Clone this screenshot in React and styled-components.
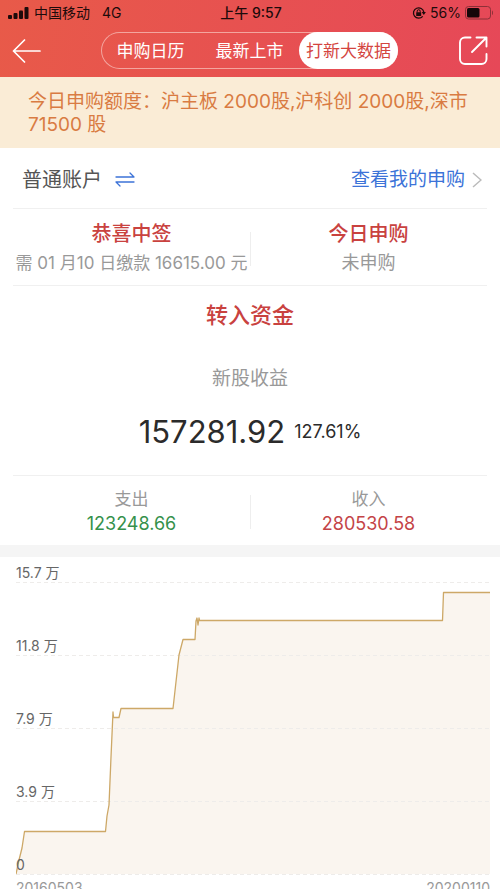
import React from "react";
import styled, { createGlobalStyle } from "styled-components";

const GlobalStyle = createGlobalStyle`
  * { box-sizing: border-box; }
  body {
    margin: 0;
    background: #fff;
    font-family: Inter, "Noto Sans CJK SC", sans-serif;
    color: #2b2b2b;
  }
  button { font: inherit; color: inherit; background: none; border: 0; padding: 0; cursor: pointer; }
  h2, p { margin: 0; font-weight: 400; }
`;

const Screen = styled.div`
  height: 100vh;
  overflow: hidden;
`;

const Header = styled.header`
  height: 77px;
  background: linear-gradient(100deg, #e85a49, #e64858);
`;

const StatusBar = styled.div`
  display: grid;
  grid-template-columns: 1fr auto 1fr;
  align-items: center;
  height: 26px;
  padding: 0 6px 0 8px;
  font-size: 14px;
  line-height: 20px;
  color: #1d0b0b;
`;

const StatusGroup = styled.div`
  display: flex;
  align-items: center;
  justify-content: ${(p) => (p.$end ? "flex-end" : "flex-start")};
  gap: ${(p) => (p.$end ? "4px" : "5px")};
`;

const Network = styled.span`
  margin-left: 7px;
`;

const Clock = styled.time`
  font-weight: 500;
`;

const NavBar = styled.nav`
  display: flex;
  align-items: center;
  justify-content: space-between;
  padding: 6px 12px 0;
`;

const IconButton = styled.button`
  display: flex;
  && { color: #fff; }
`;

const Tabs = styled.div`
  display: flex;
  flex: 1;
  height: 37px;
  margin: 0 61px 0 59px;
  border-radius: 19px;
  box-shadow: inset 0 0 0 1px #f3a59f;
`;

const Tab = styled.button`
  flex: 1;
  border-radius: 19px;
  white-space: nowrap;
  && {
    font-size: 17px;
    line-height: 24px;
    color: ${(p) => (p.$active ? "#d4453f" : "#fff")};
    background: ${(p) => (p.$active ? "#fff" : "transparent")};
  }
`;

const Notice = styled.p`
  padding: 13px 28px 12px;
  background: #faecd6;
  color: #d97b42;
  font-size: 19px;
  line-height: 23px;
`;

const AccountRow = styled.div`
  display: flex;
  align-items: center;
  justify-content: space-between;
  height: 60px;
  padding: 3px 18px 0 22px;
`;

const AccountSwitch = styled.button`
  display: flex;
  align-items: center;
  gap: 13px;
  && {
    color: #555;
    font-size: 20px;
    line-height: 28px;
  }
`;

const OrdersLink = styled.a`
  display: flex;
  align-items: center;
  gap: 7px;
  color: #3c73d8;
  font-size: 19px;
  line-height: 28px;
  text-decoration: none;
`;

const Split = styled.section`
  display: grid;
  grid-template-columns: 1fr 1fr;
  margin: 0 13px;
  padding: ${(p) => (p.$compact ? "11px 0 8px" : "11px 0 7px")};
  border-top: 1px solid #f0f0f0;
  border-bottom: ${(p) => (p.$compact ? "0" : "1px solid #f0f0f0")};
`;

const Cell = styled.div`
  display: flex;
  flex-direction: column;
  align-items: center;
  white-space: nowrap;
  & + & {
    background: linear-gradient(#eee, #eee) left center / 1px 34px no-repeat;
  }
`;

const CellTitle = styled.h2`
  color: #c9423f;
  font-size: 20px;
  line-height: 28px;
  font-weight: 500;
`;

const CellText = styled.p`
  color: #999;
  font-size: ${(p) => (p.$long ? "17px" : "18px")};
  line-height: 30px;
`;

const AmountLabel = styled.p`
  color: #999;
  font-size: 17px;
  line-height: 24px;
`;

const Amount = styled.p`
  color: ${(p) => (p.$gain ? "#c44447" : "#35914b")};
  font-size: 18px;
  line-height: 26px;
`;

const Summary = styled.section`
  display: flex;
  flex-direction: column;
  align-items: center;
  padding: 13px 0 21px;
`;

const TransferButton = styled.button`
  && {
    color: #c9423f;
    font-size: 22px;
    line-height: 32px;
    font-weight: 500;
  }
`;

const ProfitLabel = styled.p`
  margin-top: 34px;
  color: #999;
  font-size: 19px;
  line-height: 28px;
`;

const Profit = styled.p`
  display: flex;
  align-items: center;
  gap: 9px;
  margin-top: 17px;
  font-size: 31px;
  line-height: 44px;
`;

const Rate = styled.span`
  font-size: 18px;
`;

const ChartPanel = styled.section`
  padding: 0 10px 0 16px;
  border-top: 12px solid #f5f5f5;
`;

const Plot = styled.div`
  display: grid;
  & > * { grid-area: 1 / 1; }
`;

const PlotSvg = styled.svg`
  display: block;
  width: 100%;
  height: 318px;
`;

const AxisLabels = styled.div`
  display: flex;
  flex-direction: column;
  gap: 55px;
  padding-top: 7px;
  color: #666;
  font-size: 14px;
  line-height: 18px;
`;

const Dates = styled.div`
  display: flex;
  justify-content: space-between;
  padding-top: 4px;
  color: #999;
  font-size: 14px;
  line-height: 18px;
`;

const tabs = ["申购日历", "最新上市", "打新大数据"];
const axis = ["15.7 万", "11.8 万", "7.9 万", "3.9 万", "0"];
const gridLines = [25, 98, 171, 244, 317];
const series =
  "0,317 3,303 6,291 8.5,274.5 89.5,274.5 91,259 93,248 95,200 97,155 97.5,160.5 103,160.5 105,151.5 157,151.5 163,98 167,82.5 179,82.5 180,64 181,61 182,68 183,61 183.5,63.5 426.5,63.5 427.5,35.5 474,35.5";

const SignalIcon = () => (
  <svg width="21" height="12" viewBox="0 0 21 12" fill="currentColor" aria-hidden="true">
    <rect x="0" y="8" width="4" height="4" rx="1" />
    <rect x="5.5" y="6" width="4" height="6" rx="1" />
    <rect x="11" y="3.5" width="4" height="8.5" rx="1" />
    <rect x="16.5" y="0" width="4" height="12" rx="1" />
  </svg>
);

const RotationLockIcon = () => (
  <svg width="14" height="14" viewBox="0 0 14 14" fill="none" stroke="currentColor" strokeWidth="1.3" aria-hidden="true">
    <path d="M10.7 10.3A5.2 5.2 0 1 1 11.8 6.2" />
    <path d="M9.7 6.1h4.2L11.8 9z" fill="currentColor" stroke="none" />
    <rect x="4.2" y="6.3" width="5" height="3.7" rx=".5" fill="currentColor" stroke="none" />
    <path d="M5.2 6.5V5.2a1.5 1.5 0 0 1 3 0v1.3" strokeWidth="1" />
  </svg>
);

const BatteryIcon = () => (
  <svg width="29" height="14" viewBox="0 0 29 14" aria-hidden="true">
    <rect x=".5" y=".5" width="25" height="12.5" rx="3" fill="none" stroke="#8d3038" />
    <rect x="2" y="2" width="12.5" height="9.5" rx="1.5" fill="#160609" />
    <path d="M27 4.5c1.3.5 1.3 4 0 4.5z" fill="#8d3038" />
  </svg>
);

const BackIcon = () => (
  <svg width="30" height="24" viewBox="0 0 30 24" fill="none" stroke="currentColor" strokeWidth="1.7" strokeLinecap="round" strokeLinejoin="round" aria-hidden="true">
    <path d="M28 12H1.5M12.5 1 1.5 12l11 11" />
  </svg>
);

const ShareIcon = () => (
  <svg width="29" height="29" viewBox="0 0 29 29" fill="none" stroke="currentColor" strokeWidth="1.9" strokeLinecap="round" strokeLinejoin="round" aria-hidden="true">
    <path d="M11.5 1.5H6a5 5 0 0 0-5 5V23a5 5 0 0 0 5 5h16.500a5 5 0 0 0 5-5v-5M17.500 1.500h10v9M27.500 1.500 13 16" />
  </svg>
);

const SwapIcon = () => (
  <svg width="20" height="15" viewBox="0 0 20 15" fill="none" stroke="#3c73d8" strokeWidth="1.3" strokeLinecap="round" strokeLinejoin="round" aria-hidden="true">
    <path d="M1 5h18l-4-4M19 10H1l4 4" />
  </svg>
);

const ChevronIcon = () => (
  <svg width="10" height="16" viewBox="0 0 10 16" fill="none" stroke="#bbb" strokeWidth="1.5" aria-hidden="true">
    <path d="m1 1 8 7-8 7" />
  </svg>
);

export default function App() {
  return (
    <>
      <GlobalStyle />
      <Screen>
        <Header>
          <StatusBar>
            <StatusGroup>
              <SignalIcon />
              <span>中国移动</span>
              <Network>4G</Network>
            </StatusGroup>
            <Clock>上午 9:57</Clock>
            <StatusGroup $end>
              <RotationLockIcon />
              <span>56%</span>
              <BatteryIcon />
            </StatusGroup>
          </StatusBar>
          <NavBar>
            <IconButton aria-label="返回"><BackIcon /></IconButton>
            <Tabs>
              {tabs.map((name, i) => (
                <Tab key={name} $active={i === 2} aria-pressed={i === 2}>{name}</Tab>
              ))}
            </Tabs>
            <IconButton aria-label="分享"><ShareIcon /></IconButton>
          </NavBar>
        </Header>

        <Notice>今日申购额度：沪主板 2000股,沪科创 2000股,深市71500 股</Notice>

        <AccountRow>
          <AccountSwitch>普通账户<SwapIcon /></AccountSwitch>
          <OrdersLink href="#orders">查看我的申购<ChevronIcon /></OrdersLink>
        </AccountRow>

        <Split>
          <Cell>
            <CellTitle>恭喜中签</CellTitle>
            <CellText $long>需 01 月10 日缴款 16615.00 元</CellText>
          </Cell>
          <Cell>
            <CellTitle>今日申购</CellTitle>
            <CellText>未申购</CellText>
          </Cell>
        </Split>

        <Summary>
          <TransferButton>转入资金</TransferButton>
          <ProfitLabel>新股收益</ProfitLabel>
          <Profit>157281.92 <Rate>127.61%</Rate></Profit>
        </Summary>

        <Split $compact>
          <Cell>
            <AmountLabel>支出</AmountLabel>
            <Amount>123248.66</Amount>
          </Cell>
          <Cell>
            <AmountLabel>收入</AmountLabel>
            <Amount $gain>280530.58</Amount>
          </Cell>
        </Split>

        <ChartPanel>
          <Plot>
            <PlotSvg viewBox="0 0 474 318" preserveAspectRatio="none" role="img" aria-label="新股收益走势">
              <polygon points={`${series} 474,317 0,317`} fill="#faf5ef" />
              {gridLines.map((y) => (
                <line key={y} x1="0" x2="474" y1={y + 0.5} y2={y + 0.5} stroke="#eeecea" strokeDasharray="4 3" />
              ))}
              <polyline points={series} fill="none" stroke="#cda867" strokeWidth="1.3" strokeLinejoin="round" />
            </PlotSvg>
            <AxisLabels>
              {axis.map((label) => <span key={label}>{label}</span>)}
            </AxisLabels>
          </Plot>
          <Dates>
            <span>20160503</span>
            <span>20200110</span>
          </Dates>
        </ChartPanel>
      </Screen>
    </>
  );
}
